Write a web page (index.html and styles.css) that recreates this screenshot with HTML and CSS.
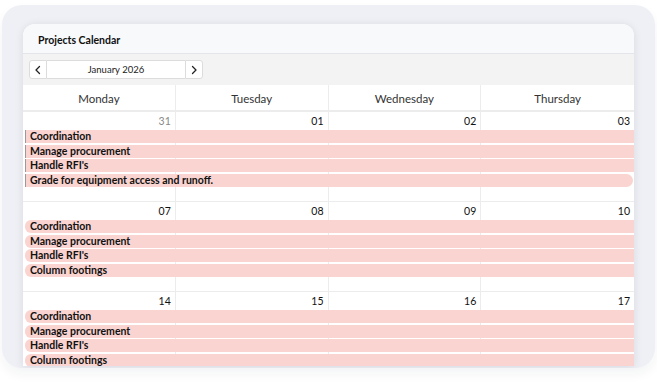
FILE: index.html
```html
<!DOCTYPE html>
<html lang="en">
<head>
    <meta charset="UTF-8">
    <meta name="viewport" content="width=device-width, initial-scale=1.0">
    <title>Projects Calendar</title>
    <link rel="stylesheet" href="styles.css">
</head>
<body>
    <div class="frame">
        <div class="card">
            <div class="card-header">Projects Calendar</div>

            <div class="toolbar">
                <div class="month-nav">
                    <button class="nav-btn" aria-label="Previous month">
                        <svg viewBox="0 0 10 10" width="10" height="10"><path d="M6.5 1.5 L3 5 L6.5 8.5" fill="none" stroke="#222" stroke-width="1.3" stroke-linecap="round" stroke-linejoin="round"/></svg>
                    </button>
                    <div class="month-label">January 2026</div>
                    <button class="nav-btn" aria-label="Next month">
                        <svg viewBox="0 0 10 10" width="10" height="10"><path d="M3.5 1.5 L7 5 L3.5 8.5" fill="none" stroke="#222" stroke-width="1.3" stroke-linecap="round" stroke-linejoin="round"/></svg>
                    </button>
                </div>
            </div>

            <div class="weekdays">
                <div class="weekday">Monday</div>
                <div class="weekday">Tuesday</div>
                <div class="weekday">Wednesday</div>
                <div class="weekday">Thursday</div>
            </div>

            <!-- week 1 -->
            <div class="week">
                <div class="day"><span class="day-num other">31</span></div>
                <div class="day"><span class="day-num">01</span></div>
                <div class="day"><span class="day-num">02</span></div>
                <div class="day"><span class="day-num">03</span></div>
                <div class="event cont r2">Coordination</div>
                <div class="event cont r3">Manage procurement</div>
                <div class="event cont r4">Handle RFI's</div>
                <div class="event cont ends r5">Grade for equipment access and runoff.</div>
            </div>

            <!-- week 2 -->
            <div class="week">
                <div class="day"><span class="day-num">07</span></div>
                <div class="day"><span class="day-num">08</span></div>
                <div class="day"><span class="day-num">09</span></div>
                <div class="day"><span class="day-num">10</span></div>
                <div class="event starts r2">Coordination</div>
                <div class="event starts r3">Manage procurement</div>
                <div class="event starts r4">Handle RFI's</div>
                <div class="event starts r5">Column footings</div>
            </div>

            <!-- week 3 -->
            <div class="week">
                <div class="day"><span class="day-num">14</span></div>
                <div class="day"><span class="day-num">15</span></div>
                <div class="day"><span class="day-num">16</span></div>
                <div class="day"><span class="day-num">17</span></div>
                <div class="event starts r2">Coordination</div>
                <div class="event starts r3">Manage procurement</div>
                <div class="event starts r4">Handle RFI's</div>
                <div class="event starts r5">Column footings</div>
            </div>
        </div>
    </div>
</body>
</html>
```

FILE: styles.css
```css
body {
    margin: 0;
    height: 392px;
    background: #fff;
    font-family: 'Lato', 'Noto Sans', sans-serif;
    color: #1a1a1a;
}
.frame {
    margin: 5px 2px 0 2px;
    height: 363px;
    box-sizing: border-box;
    padding: 19px 21px 2px 21px;
    background: #eff0f5;
    border-radius: 20px;
    box-shadow: 0 6px 12px rgba(20, 30, 60, 0.05);
    overflow: hidden;
}
.card {
    height: 342px;
    background: #fff;
    border-radius: 12px 12px 0 0;
    box-shadow: 0 1px 8px rgba(20, 30, 60, 0.10);
    overflow: hidden;
}
.card-header {
    height: 30px;
    box-sizing: border-box;
    padding: 4px 0 0 15px;
    line-height: 25px;
    background: #f8f9fb;
    border-bottom: 1px solid #e4e5ea;
    font-size: 10.5px;
    font-weight: 700;
    color: #111;
}
.toolbar {
    height: 31px;
    box-sizing: border-box;
    padding: 6px 0 0 6px;
    background: #f3f3f3;
}
.month-nav {
    display: flex;
    height: 19px;
    width: 174px;
}
.nav-btn {
    width: 18px;
    height: 19px;
    padding: 0;
    margin: 0;
    display: flex;
    align-items: center;
    justify-content: center;
    background: #fff;
    border: 1px solid #dcdcdc;
}
.nav-btn:first-child {
    border-radius: 3px 0 0 3px;
}
.nav-btn:last-child {
    border-radius: 0 3px 3px 0;
}
.month-label {
    flex: 1;
    background: #fff;
    border-top: 1px solid #dcdcdc;
    border-bottom: 1px solid #dcdcdc;
    font-size: 9.5px;
    line-height: 18px;
    text-align: center;
    color: #222;
}
.weekdays {
    display: grid;
    grid-template-columns: repeat(4, 1fr);
    height: 25px;
    border-bottom: 2px solid #ececec;
}
.weekday {
    font-size: 11.5px;
    line-height: 27px;
    text-align: center;
    color: #333;
    border-right: 1px solid #ececec;
}
.weekday:last-child {
    border-right: none;
}
.week {
    display: grid;
    grid-template-columns: repeat(4, 1fr);
    grid-template-rows: 17px repeat(4, 13px) 1fr;
    row-gap: 1.4px;
    height: 89px;
    border-bottom: 1px solid #ececec;
}
.day {
    grid-row: 1 / -1;
    border-right: 1px solid #ececec;
    text-align: right;
    padding-right: 4px;
}
.day:nth-child(4) {
    border-right: none;
}
.day:nth-child(1) { grid-column: 1; }
.day:nth-child(2) { grid-column: 2; }
.day:nth-child(3) { grid-column: 3; }
.day:nth-child(4) { grid-column: 4; }
.day-num {
    display: block;
    font-size: 10.5px;
    line-height: 18px;
    color: #111;
}
.day-num.other {
    color: #8a8a8a;
}
.event {
    grid-column: 1 / -1;
    margin-left: 2px;
    padding-left: 5px;
    background: #fad4d0;
    font-size: 10.5px;
    font-weight: 700;
    line-height: 13px;
    color: #111;
    white-space: nowrap;
    overflow: hidden;
}
.event.r2 { grid-row: 2; }
.event.r3 { grid-row: 3; }
.event.r4 { grid-row: 4; }
.event.r5 { grid-row: 5; }
.event.cont {
    border-left: 1px solid #9a9a9a;
    padding-left: 4px;
}
.event.starts {
    border-radius: 6px 0 0 6px;
}
.event.ends {
    border-radius: 0 7px 7px 0;
    margin-right: 1px;
}
```
